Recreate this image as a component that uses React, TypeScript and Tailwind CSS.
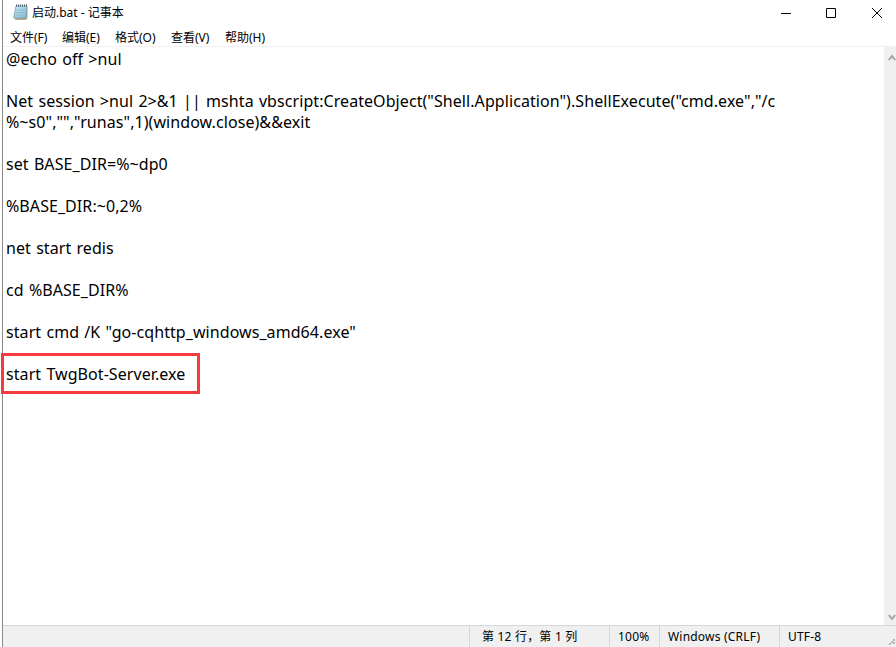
// Notepad window: title bar, menu, text area with scrollbar, status bar
const MENU = [
  { label: "文件(F)", w: "w-[52px]" },
  { label: "编辑(E)", w: "w-[53px]" },
  { label: "格式(O)", w: "w-[56px]" },
  { label: "查看(V)", w: "w-[54px]" },
  { label: "帮助(H)", w: "w-[54px]" },
];

const TEXT = [
  "@echo off >nul",
  "",
  'Net session >nul 2>&1 || mshta vbscript:CreateObject("Shell.Application").ShellExecute("cmd.exe","/c',
  '%~s0","","runas",1)(window.close)&&exit',
  "",
  "set BASE_DIR=%~dp0",
  "",
  "%BASE_DIR:~0,2%",
  "",
  "net start redis",
  "",
  "cd %BASE_DIR%",
  "",
  'start cmd /K "go-cqhttp_windows_amd64.exe"',
  "",
  "start TwgBot-Server.exe",
];

function NotepadIcon() {
  return (
    <svg width="17" height="17" viewBox="0 0 17 17" className="shrink-0">
      <defs>
        <linearGradient id="page" x1="0" y1="0" x2="1" y2="1">
          <stop offset="0" stopColor="#cfe8f2" />
          <stop offset="1" stopColor="#7fb9d2" />
        </linearGradient>
      </defs>
      <path d="M5 3h10.5v11L14 16H3z" fill="#b9a98a" />
      <path d="M4 2h11l-1 12H1.5z" fill="url(#page)" stroke="#6f9db3" strokeWidth="0.8" />
      <path d="M4.5 6h8.5M4 8.5h8.5M3.5 11h8.5" stroke="#8dbbd0" strokeWidth="1" />
      <path d="M4 1.5h11" stroke="#4d5a62" strokeWidth="2" strokeDasharray="1 1" />
    </svg>
  );
}

export default function App() {
  return (
    <div className="h-[647px] w-[896px] overflow-hidden bg-white pl-[2px] font-['Noto_Sans','Noto_Sans_CJK_SC',sans-serif] text-black">
      <div className="flex h-full flex-col border-l border-[#8a8a8a]">
        <div className="flex h-[25px] items-center pl-[9px]">
          <NotepadIcon />
          <span className="ml-[3px] mt-[1px] text-xs">启动.bat - 记事本</span>
          <div className="ml-auto flex h-full items-center">
            <div className="flex w-[46px] justify-center pl-[2px]">
              <svg width="10" height="10" viewBox="0 0 10 10"><path d="M0 5.5h10" stroke="#000" /></svg>
            </div>
            <div className="flex w-[46px] justify-center">
              <svg width="10" height="10" viewBox="0 0 10 10"><path d="M.5.5h9v9h-9z" fill="none" stroke="#000" /></svg>
            </div>
            <div className="flex w-[42px] pl-[18px]">
              <svg width="10" height="10" viewBox="0 0 10 10"><path d="M0 0l10 10M10 0L0 10" stroke="#000" /></svg>
            </div>
          </div>
        </div>
        <div className="mt-[5px] flex h-4 items-center pl-[7px] text-xs">
          {MENU.map((m) => (
            <span key={m.label} className={`${m.w} whitespace-nowrap`}>{m.label}</span>
          ))}
        </div>
        <div className="flex min-h-0 flex-1 border-t border-[#f0f0f0]">
          <div className="relative min-w-0 flex-1 pl-[3px] pt-[2px] text-base leading-[21px] tracking-[0.07px] [word-spacing:1px]">
            {TEXT.map((line, i) => (
              <div key={i} className="h-[21px] whitespace-pre">
                {line}
              </div>
            ))}
            {/* highlight round the last line */}
            <div className="absolute left-[-2px] top-[306px] h-[41px] w-[199px] border-[3px] border-[#f63b3e]" />
          </div>
          <div className="flex w-[12px] flex-col justify-between bg-[#f0f0f0] pb-[4px] pl-[4px] pt-[7px]">
            <svg width="8" height="7" viewBox="0 0 8 7"><path d="M.8 6L4 2l3.2 4" fill="none" stroke="#a3a3a3" strokeWidth="2" /></svg>
            <svg width="8" height="7" viewBox="0 0 8 7"><path d="M.8 1L4 5l3.2-4" fill="none" stroke="#a3a3a3" strokeWidth="2" /></svg>
          </div>
        </div>
        <div className="relative flex h-[22px] items-center border-t border-[#d7d7d7] bg-[#f0f0f0] text-xs tracking-[0.2px]">
          <div className="ml-[466px] flex h-full w-[140px] items-center border-l border-[#d7d7d7] pl-3">第 12 行，第 1 列</div>
          <div className="flex h-full w-[50px] items-center border-l border-[#d7d7d7] pl-2">100%</div>
          <div className="flex h-full w-[120px] items-center border-l border-[#d7d7d7] pl-2">Windows (CRLF)</div>
          <div className="flex h-full flex-1 items-center border-l border-[#d7d7d7] pl-2">UTF-8</div>
          {/* resize grip */}
          <svg width="6" height="6" viewBox="0 0 6 6" className="absolute bottom-[2px] right-[1px]">
            <path d="M4 0h2v2H4zM2 2h2v2H2zM4 3h2v2H4zM0 4h2v2H0z" fill="#b5b5b5" />
          </svg>
        </div>
      </div>
    </div>
  );
}
